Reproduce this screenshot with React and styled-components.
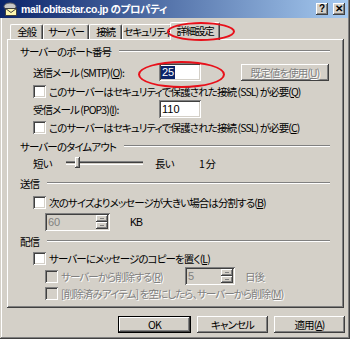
import styled, { createGlobalStyle } from 'styled-components'

const GlobalStyle = createGlobalStyle`
  html, body {
    margin: 0;
    padding: 0;
    background: #d4d0c8;
  }
  body {
    font-family: "Noto Sans CJK JP", "Liberation Sans", sans-serif;
    font-size: 10.5px;
    color: #000;
  }
`

const raised = 'inset -1px -1px #404040, inset 1px 1px #ffffff, inset -2px -2px #808080, inset 2px 2px #d4d0c8'
const sunken = 'inset 1px 1px #808080, inset -1px -1px #ffffff, inset 2px 2px #404040, inset -2px -2px #d4d0c8'

const Window = styled.div`
  position: relative;
  width: 350px;
  height: 339px;
  box-sizing: border-box;
  padding: 0 3px 3px 3px;
  background: #d4d0c8;
  box-shadow: inset -1px -1px #404040, inset 1px 0 #d4d0c8, inset -2px -2px #808080, inset 2px 0 #ffffff;
  display: flex;
  flex-direction: column;
  font-feature-settings: "palt";
  letter-spacing: -0.9px;
  overflow: hidden;
`

const TitleBar = styled.div`
  height: 18px;
  margin: 0 -1px 0 -3px;
  padding: 0 3px 0 3px;
  display: flex;
  align-items: center;
  gap: 3px;
  background: linear-gradient(to right, #0a246a, #a6caf0);
`

const TitleText = styled.div`
  flex: 1;
  color: #fff;
  font-family: "Liberation Sans", "Noto Sans CJK JP", sans-serif;
  font-weight: bold;
  font-size: 10.5px;
  letter-spacing: -0.4px;
  line-height: 18px;
  white-space: nowrap;
`

const CaptionButton = styled.div`
  width: 12px;
  height: 12px;
  background: #d4d0c8;
  box-shadow: ${raised};
  display: flex;
  align-items: center;
  justify-content: center;
  font-family: "Liberation Sans", sans-serif;
  font-weight: bold;
  font-size: 10px;
  letter-spacing: 0;
  line-height: 12px;
  margin-left: ${p => p.$gap || 0}px;
`

const Body = styled.div`
  padding: 2px 3px 0 4px;
  display: flex;
  flex-direction: column;
`

const TabStrip = styled.div`
  height: 19px;
  display: flex;
  align-items: flex-end;
  padding-left: 3px;
  position: relative;
  z-index: 1;
`

const Tab = styled.div`
  width: ${p => p.$w}px;
  height: ${p => (p.$active ? 18 : 15)}px;
  margin: 0 ${p => (p.$active ? -2 : 0)}px ${p => (p.$active ? -1 : 0)}px;
  box-sizing: border-box;
  flex: none;
  display: flex;
  justify-content: center;
  letter-spacing: -1.2px;
  border-top: 1px solid #fff;
  border-left: 1px solid #fff;
  border-right: 1px solid #404040;
  border-radius: 2px 2px 0 0;
  background: #d4d0c8;
  line-height: ${p => (p.$active ? 15 : 13)}px;
  white-space: nowrap;
  box-shadow: inset -1px 0 #808080;
  position: relative;
  z-index: ${p => (p.$active ? 1 : 0)};
`

const Panel = styled.div`
  height: 269px;
  box-sizing: border-box;
  padding: 4px 14px 0 13px;
  box-shadow: inset -1px -1px #404040, inset 1px 1px #ffffff, inset -2px -2px #808080;
  display: flex;
  flex-direction: column;
`

const GroupHeader = styled.div`
  height: 16px;
  margin-top: ${p => p.$mt || 0}px;
  display: flex;
  align-items: center;
  gap: 8px;
  white-space: nowrap;
  &::after {
    content: "";
    flex: 1;
    height: 0;
    border-top: 1px solid #808080;
    border-bottom: 1px solid #ffffff;
  }
`

const Row = styled.div`
  height: ${p => p.$h || 18}px;
  margin-top: ${p => p.$mt || 0}px;
  padding-left: ${p => p.$indent || 13}px;
  display: flex;
  align-items: center;
  white-space: nowrap;
  color: ${p => (p.$disabled ? '#808080' : '#000')};
  text-shadow: ${p => (p.$disabled ? '1px 1px #ffffff' : 'none')};
`

const Label = styled.span`
  width: ${p => p.$w}px;
  flex: none;
`

const Check = styled.span`
  width: 13px;
  height: 13px;
  flex: none;
  margin-right: 3px;
  background: ${p => (p.$disabled ? '#d4d0c8' : '#fff')};
  box-shadow: ${sunken};
`

const TextBox = styled.div`
  width: ${p => p.$w}px;
  height: 18px;
  box-sizing: border-box;
  padding: 0 3px;
  flex: none;
  display: flex;
  align-items: center;
  background: ${p => (p.$disabled ? '#d4d0c8' : '#fff')};
  box-shadow: ${sunken};
  font-family: "Liberation Sans", sans-serif;
  font-size: 11px;
  letter-spacing: 0;
  color: ${p => (p.$disabled ? '#808080' : '#000')};
  text-shadow: none;
  margin-left: ${p => p.$ml || 0}px;
`

const Selected = styled.span`
  background: #0a246a;
  color: #fff;
  padding: 0 1px;
  margin-left: -1px;
  line-height: 13px;
`

const Spin = styled.div`
  flex: 1;
  display: flex;
  align-items: center;
`

const SpinButtons = styled.div`
  width: 12px;
  height: 14px;
  margin-right: -1px;
  display: flex;
  flex-direction: column;
`

const SpinButton = styled.div`
  flex: 1;
  background: #d4d0c8;
  box-shadow: ${raised};
  display: flex;
  align-items: center;
  justify-content: center;
  &::after {
    content: "";
    width: 4px;
    height: 1px;
    background: #808080;
  }
`

const PushButton = styled.div`
  width: ${p => p.$w}px;
  height: ${p => p.$h || 17}px;
  box-sizing: border-box;
  flex: none;
  display: flex;
  align-items: center;
  justify-content: center;
  background: #d4d0c8;
  box-shadow: ${p => (p.$default ? `inset 0 0 0 1px #000, inset -2px -2px #404040, inset 2px 2px #ffffff, inset -3px -3px #808080` : raised)};
  color: ${p => (p.$disabled ? '#808080' : '#000')};
  text-shadow: ${p => (p.$disabled ? '1px 1px #ffffff' : 'none')};
  margin-left: ${p => p.$ml || 0}px;
  white-space: nowrap;
`

const Text = styled.span`
  flex: none;
  margin-left: ${p => p.$ml || 0}px;
  font-family: ${p => (p.$latin ? '"Liberation Sans", sans-serif' : 'inherit')};
  color: ${p => (p.$plain ? '#000' : 'inherit')};
  text-shadow: ${p => (p.$plain ? 'none' : 'inherit')};
`

const SliderBox = styled.div`
  position: relative;
  flex: none;
  width: 89px;
  height: 18px;
  display: flex;
  align-items: center;
`

const Track = styled.div`
  width: 77px;
  height: 2px;
  border-top: 1px solid #808080;
  border-bottom: 1px solid #ffffff;
  box-shadow: inset 0 1px #404040;
`

const Thumb = styled.div`
  position: absolute;
  left: 9px;
  top: 3px;
  width: 5px;
  height: 11px;
  background: #d4d0c8;
  box-shadow: ${raised};
`

const Footer = styled.div`
  display: flex;
  justify-content: flex-end;
  gap: 6px;
  padding: 8px 2px 0 0;
`

const Ring = styled.div`
  position: absolute;
  left: ${p => p.$x}px;
  top: ${p => p.$y}px;
  width: ${p => p.$w}px;
  height: ${p => p.$h}px;
  box-sizing: border-box;
  border: 2px solid #e8101a;
  border-radius: 50%;
  pointer-events: none;
  z-index: 5;
`

function MailIcon() {
  return (
    <svg width="15" height="15" viewBox="0 0 15 15">
      <ellipse cx="7" cy="4.5" rx="6" ry="3.5" fill="#c8c8c8" stroke="#606060" strokeWidth="1" />
      <rect x="2.5" y="6.5" width="11" height="7" fill="#fff8b0" stroke="#404040" strokeWidth="1" />
      <path d="M2.5 6.5 L8 10.5 L13.5 6.5" fill="none" stroke="#404040" strokeWidth="1" />
    </svg>
  )
}

export default function App() {
  return (
    <>
      <GlobalStyle />
      <Window>
        <TitleBar>
          <MailIcon />
          <TitleText>mail.obitastar.co.jp のプロパティ</TitleText>
          <CaptionButton>?</CaptionButton>
          <CaptionButton $gap={2}>✕</CaptionButton>
        </TitleBar>

        <Body>
          <TabStrip>
            <Tab $w={33}>全般</Tab>
            <Tab $w={46}>サーバー</Tab>
            <Tab $w={33}>接続</Tab>
            <Tab $w={50}>セキュリティ</Tab>
            <Tab $w={50} $active>詳細設定</Tab>
          </TabStrip>

          <Panel>
            <GroupHeader>サーバーのポート番号</GroupHeader>
            <Row $mt={4}>
              <Label $w={126}>送信メール (SMTP)(<u>O</u>):</Label>
              <TextBox $w={42}><Selected>25</Selected></TextBox>
              <PushButton $w={88} $ml={40} $disabled>既定値を使用(<u>U</u>)</PushButton>
            </Row>
            <Row $mt={1}>
              <Check />
              このサーバーはセキュリティで保護された接続 (SSL) が必要(<u>Q</u>)
            </Row>
            <Row>
              <Label $w={126}>受信メール (POP3)(<u>I</u>):</Label>
              <TextBox $w={42}>110</TextBox>
            </Row>
            <Row>
              <Check />
              このサーバーはセキュリティで保護された接続 (SSL) が必要(<u>C</u>)
            </Row>

            <GroupHeader $mt={2}>サーバーのタイムアウト</GroupHeader>
            <Row>
              <Label $w={33}>短い</Label>
              <SliderBox>
                <Track />
                <Thumb />
              </SliderBox>
              <Label $w={44}>長い</Label>
              <Text>1 分</Text>
            </Row>

            <GroupHeader $mt={3}>送信</GroupHeader>
            <Row $mt={2}>
              <Check />
              次のサイズよりメッセージが大きい場合は分割する(<u>B</u>)
            </Row>
            <Row $h={22} $indent={25} $disabled>
              <TextBox $w={65} $disabled>
                <Spin>60</Spin>
                <SpinButtons><SpinButton /><SpinButton /></SpinButtons>
              </TextBox>
              <Text $ml={20} $latin $plain>KB</Text>
            </Row>

            <GroupHeader>配信</GroupHeader>
            <Row>
              <Check />
              サーバーにメッセージのコピーを置く(<u>L</u>)
            </Row>
            <Row $indent={25} $disabled>
              <Check $disabled />
              <Label $w={124}>サーバーから削除する(<u>R</u>)</Label>
              <TextBox $w={50} $disabled>
                <Spin>5</Spin>
                <SpinButtons><SpinButton /><SpinButton /></SpinButtons>
              </TextBox>
              <Text $ml={10}>日後</Text>
            </Row>
            <Row $h={16} $indent={25} $disabled>
              <Check $disabled />
              [削除済みアイテム] を空にしたら、サーバーから削除(<u>M</u>)
            </Row>
          </Panel>
        </Body>

        <Footer>
          <PushButton $w={73} $default>OK</PushButton>
          <PushButton $w={71}>キャンセル</PushButton>
          <PushButton $w={71}>適用(<u>A</u>)</PushButton>
        </Footer>

        <Ring $x={167} $y={22} $w={68} $h={19} />
        <Ring $x={138} $y={61} $w={87} $h={27} />
      </Window>
    </>
  )
}
